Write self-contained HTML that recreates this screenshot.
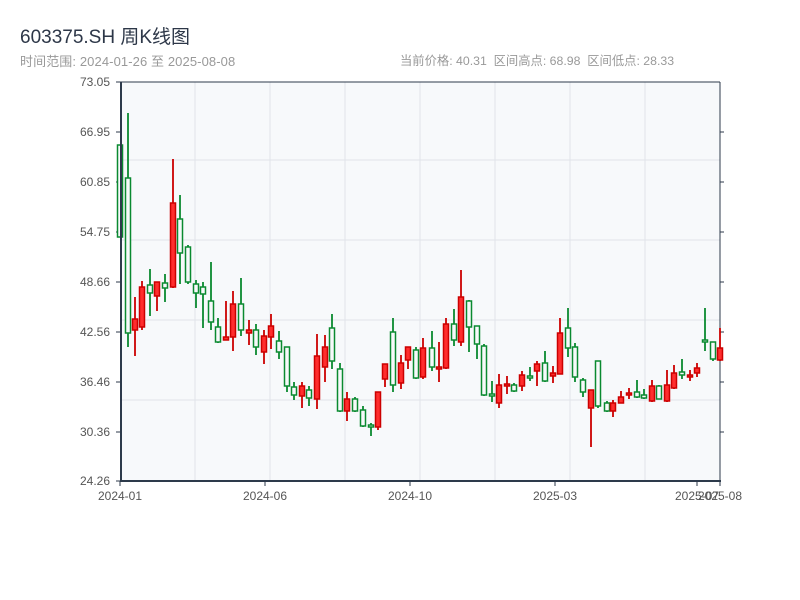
<!DOCTYPE html>
<html><head><meta charset="utf-8"><style>
body{margin:0;background:#fff;width:800px;height:600px;overflow:hidden;font-family:"Liberation Sans","Noto Sans CJK SC",sans-serif}
.t{position:absolute;left:20px;top:22px;font-size:19px;color:#2d3748}
.s{position:absolute;left:20px;top:51px;font-size:13px;color:#999;letter-spacing:0.1px}
.r{position:absolute;left:400px;top:51px;font-size:12.3px;color:#999}
svg{position:absolute;left:0;top:0}
</style></head><body>
<div class="t">603375.SH 周K线图</div>
<div class="s">时间范围: 2024-01-26 至 2025-08-08</div>
<div class="r">当前价格: 40.31&nbsp;&nbsp;区间高点: 68.98&nbsp;&nbsp;区间低点: 28.33</div>
<svg width="800" height="600" xmlns="http://www.w3.org/2000/svg">
<rect x="120" y="82" width="600" height="399" fill="#f7f9fb"/>
<g stroke="#e1e4ea" stroke-width="1">
<line x1="195" y1="82" x2="195" y2="481"/><line x1="270" y1="82" x2="270" y2="481"/><line x1="345" y1="82" x2="345" y2="481"/><line x1="420" y1="82" x2="420" y2="481"/><line x1="495" y1="82" x2="495" y2="481"/><line x1="570" y1="82" x2="570" y2="481"/><line x1="645" y1="82" x2="645" y2="481"/>
<line x1="120" y1="160" x2="720" y2="160"/><line x1="120" y1="240" x2="720" y2="240"/><line x1="120" y1="320" x2="720" y2="320"/><line x1="120" y1="400" x2="720" y2="400"/>
</g>
<g stroke="#2d3a4b" stroke-width="1">
<line x1="120" y1="82" x2="720" y2="82"/>
<line x1="720" y1="82" x2="720" y2="481"/>
<line x1="720" y1="132" x2="724" y2="132"/><line x1="720" y1="182" x2="724" y2="182"/><line x1="720" y1="232" x2="724" y2="232"/><line x1="720" y1="282" x2="724" y2="282"/><line x1="720" y1="332" x2="724" y2="332"/><line x1="720" y1="382" x2="724" y2="382"/><line x1="720" y1="432" x2="724" y2="432"/>
<line x1="116" y1="82" x2="120" y2="82"/><line x1="116" y1="132" x2="120" y2="132"/><line x1="116" y1="182" x2="120" y2="182"/><line x1="116" y1="232" x2="120" y2="232"/><line x1="116" y1="282" x2="120" y2="282"/><line x1="116" y1="332" x2="120" y2="332"/><line x1="116" y1="382" x2="120" y2="382"/><line x1="116" y1="432" x2="120" y2="432"/><line x1="116" y1="481" x2="120" y2="481"/>
<line x1="120" y1="481" x2="120" y2="486"/><line x1="265" y1="481" x2="265" y2="486"/><line x1="410" y1="481" x2="410" y2="486"/><line x1="555" y1="481" x2="555" y2="486"/><line x1="697" y1="481" x2="697" y2="486"/><line x1="720" y1="481" x2="720" y2="486"/>
</g>
<g id="c"></g>
<line x1="121" y1="82" x2="121" y2="482" stroke="#2d3a4b" stroke-width="2"/>
<line x1="120" y1="481" x2="721" y2="481" stroke="#2d3a4b" stroke-width="2"/>
<g font-size="12" fill="#555" text-anchor="end" font-family="Liberation Sans, sans-serif">
<text x="110" y="86">73.05</text><text x="110" y="136">66.95</text><text x="110" y="186">60.85</text><text x="110" y="236">54.75</text><text x="110" y="286">48.66</text><text x="110" y="336">42.56</text><text x="110" y="386">36.46</text><text x="110" y="436">30.36</text><text x="110" y="485">24.26</text>
</g>
<g font-size="12" fill="#555" text-anchor="middle" font-family="Liberation Sans, sans-serif">
<text x="120" y="500">2024-01</text><text x="265" y="500">2024-06</text><text x="410" y="500">2024-10</text><text x="555" y="500">2025-03</text><text x="697" y="500">2025-07</text><text x="720" y="500">2025-08</text>
</g>
</svg>
<script>
var d="g120,145,237,145,237;g128,113,347,178,333;r135,297,356,319,330;r142,281,330,287,327;g150,269,316,285,293;r157,282,311,282,296;g165,274,302,283,288;r173,159,288,203,287;g180,195,284,219,253;g188,245,284,247,282;g196,280,308,284,293;g203,282,328,287,294;g211,262,330,301,322;g218,318,343,327,342;r226,301,340,337,340;r233,291,351,304,337;g241,278,336,304,330;r249,320,345,330,333;g256,324,355,330,347;r264,330,364,336,352;r271,314,349,326,337;g279,331,359,341,352;g287,347,392,347,386;g294,382,400,387,395;r302,382,408,386,396;g309,386,406,390,398;r317,334,409,356,399;r325,335,382,347,367;g332,314,369,328,361;g340,363,412,369,411;r347,392,421,399,411;g355,397,412,399,411;g363,406,427,410,426;g371,423,436,425,427;r378,392,430,392,427;r385,364,387,364,379;g393,318,392,332,385;r401,355,389,363,383;r408,347,369,347,360;g416,347,379,350,378;r423,338,379,348,377;g432,331,371,348,367;r439,342,382,367,369;r446,318,369,324,368;g454,309,346,324,340;r461,270,346,297,342;g469,300,352,301,327;g477,326,359,326,344;g484,344,396,346,395;g492,381,402,394,396;r499,374,408,385,403;r507,376,394,384,386;g514,383,392,385,391;r522,371,391,375,386;g530,367,381,376,378;r537,361,386,364,371;g545,351,382,363,381;r553,366,383,373,376;r560,318,374,333,374;g568,308,357,328,348;g575,343,382,347,377;g583,378,397,380,392;r591,390,447,390,408;g598,361,408,361,406;g607,401,412,403,411;r613,400,417,403,411;r621,391,403,397,403;r629,388,399,393,395;g637,380,398,392,397;g644,389,399,395,398;r652,380,402,386,401;g659,385,399,386,399;r667,370,402,385,401;r674,365,389,373,388;g682,359,379,372,375;r690,370,381,375,377;r697,363,377,368,373;g705,308,351,340,342;g713,342,361,342,359;r720,328,361,348,360";
var s="";d.split(";").forEach(function(e){var c=e[0],v=e.slice(1).split(",").map(Number);var st=c=="r"?"#cc0000":"#0a8a30",f=c=="r"?"#ff2d2d":"#f7f9fb";var h=Math.max(1.5,v[4]-v[3]);
s+='<line x1="'+v[0]+'" y1="'+v[1]+'" x2="'+v[0]+'" y2="'+v[2]+'" stroke="'+st+'" stroke-width="1.8"/>';
s+='<rect x="'+(v[0]-2.5)+'" y="'+v[3]+'" width="5" height="'+h+'" fill="'+f+'" stroke="'+st+'" stroke-width="1.5"/>';});
document.getElementById("c").innerHTML=s;
</script>
</body></html>
